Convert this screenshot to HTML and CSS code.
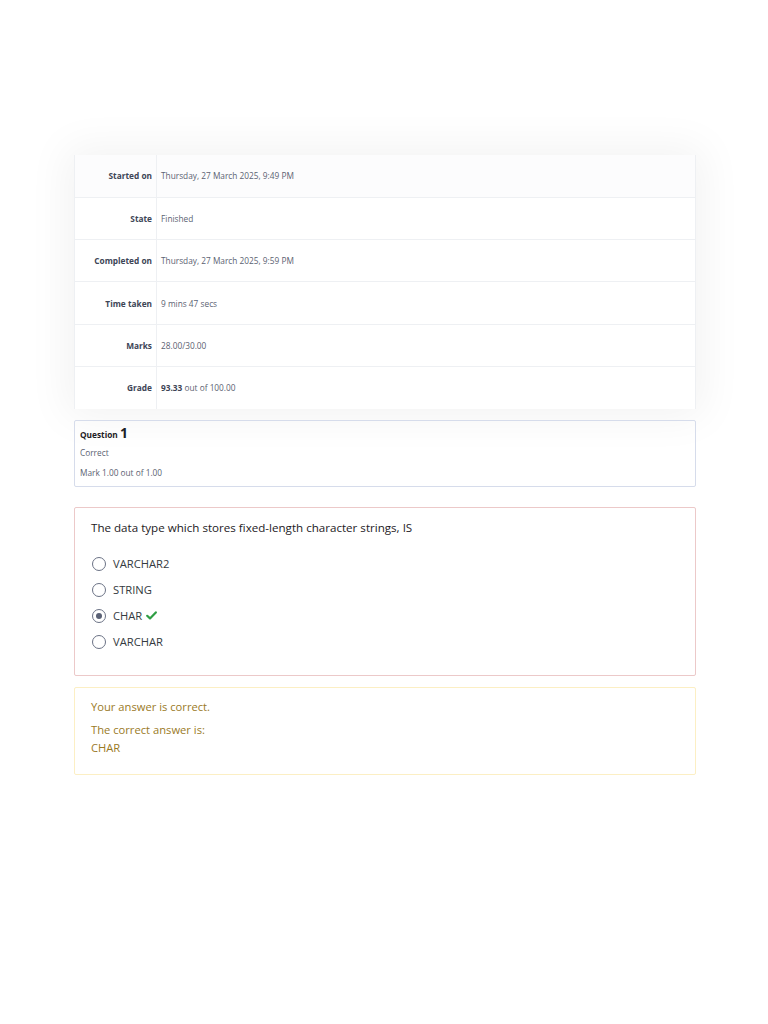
FILE: index.html
```html
<!DOCTYPE html>
<html lang="en">
<head>
    <meta charset="UTF-8">
    <meta name="viewport" content="width=device-width, initial-scale=1.0">
    <title>Quiz review</title>
    <link rel="stylesheet" href="styles.css">
</head>
<body>
    <div class="page">
        <table class="summary">
            <tr>
                <th>Started on</th>
                <td>Thursday, 27 March 2025, 9:49 PM</td>
            </tr>
            <tr>
                <th>State</th>
                <td>Finished</td>
            </tr>
            <tr>
                <th>Completed on</th>
                <td>Thursday, 27 March 2025, 9:59 PM</td>
            </tr>
            <tr>
                <th>Time taken</th>
                <td>9 mins 47 secs</td>
            </tr>
            <tr>
                <th>Marks</th>
                <td>28.00/30.00</td>
            </tr>
            <tr>
                <th>Grade</th>
                <td><b>93.33</b> out of 100.00</td>
            </tr>
        </table>

        <div class="q-info">
            <h3>Question <span class="qno">1</span></h3>
            <p>Correct</p>
            <p>Mark 1.00 out of 1.00</p>
        </div>

        <div class="q-content">
            <p class="q-text">The data type which stores fixed-length character strings, IS</p>
            <div class="answers">
                <label class="option"><span class="radio"></span>VARCHAR2</label>
                <label class="option"><span class="radio"></span>STRING</label>
                <label class="option"><span class="radio checked"></span>CHAR
                    <svg class="tick" width="11" height="9" viewBox="0 0 11 9"><path d="M1.2 4.8 L4 7.4 L9.8 1.4" fill="none" stroke="#2f9e44" stroke-width="2.2" stroke-linecap="round" stroke-linejoin="round"/></svg>
                </label>
                <label class="option"><span class="radio"></span>VARCHAR</label>
            </div>
        </div>

        <div class="feedback">
            <p>Your answer is correct.</p>
            <p class="right-answer">The correct answer is:<br>CHAR</p>
        </div>
    </div>
</body>
</html>
```

FILE: styles.css
```css
* {
    box-sizing: border-box;
    margin: 0;
    padding: 0;
}

body {
    background: #fff;
    color: #1d2125;
    font-family: 'Open Sans', 'Liberation Sans', sans-serif;
}

.page {
    width: 622px;
    margin: 0 0 0 74px;
    padding-top: 155px;
}

.summary {
    width: 100%;
    border-collapse: collapse;
    background: #fff;
    box-shadow: 0 0 40px 8px rgba(0, 0, 0, 0.05);
    border-left: 1px solid #eef0f3;
    border-right: 1px solid #eef0f3;
    font-size: 8.3px;
}

.summary tr {
    height: 42.3px;
    border-bottom: 1px solid #eef0f3;
}

.summary tr:first-child {
    background: #fcfcfd;
}

.summary tr:last-child {
    border-bottom: none;
}

.summary th {
    width: 82px;
    text-align: right;
    padding-right: 4px;
    color: #3d4556;
    font-weight: 700;
    border-right: 1px solid #eef0f3;
}

.summary td {
    padding-left: 4px;
    color: #5b6272;
}

.summary td b {
    color: #3d4556;
}

.q-info {
    margin-top: 11px;
    border: 1px solid #d6dceb;
    border-radius: 2px;
    padding: 4px 5px 8px;
    font-size: 8.3px;
    color: #5b6272;
}

.q-info h3 {
    font-size: 8.3px;
    font-weight: 700;
    color: #1d2125;
    line-height: 16px;
}

.qno {
    font-size: 14px;
}

.q-info p {
    line-height: 11px;
    margin-top: 9px;
}

.q-info h3 + p {
    margin-top: 4px;
}

.q-content {
    margin-top: 20px;
    height: 169px;
    border: 1px solid #ecc9c9;
    border-radius: 2px;
    padding: 12px 16px;
}

.q-text {
    font-size: 11.6px;
    line-height: 15px;
    color: #1d2125;
}

.answers {
    margin-top: 21px;
    display: flex;
    flex-direction: column;
    gap: 10px;
}

.option {
    display: flex;
    align-items: center;
    gap: 7px;
    height: 16px;
    font-size: 11.2px;
    color: #343a40;
}

.radio {
    width: 14px;
    height: 14px;
    margin-left: 1px;
    border: 1px solid #6b7285;
    border-radius: 50%;
    display: flex;
    align-items: center;
    justify-content: center;
}

.radio.checked::after {
    content: "";
    width: 6px;
    height: 6px;
    border-radius: 50%;
    background: #5a6175;
}

.tick {
    margin-left: -3px;
}

.feedback {
    margin-top: 11px;
    height: 88px;
    border: 1px solid #fcefc4;
    border-radius: 2px;
    padding: 10px 16px;
    font-size: 11.2px;
    color: #9a7a1f;
    line-height: 18px;
}

.right-answer {
    margin-top: 5px;
}
```
